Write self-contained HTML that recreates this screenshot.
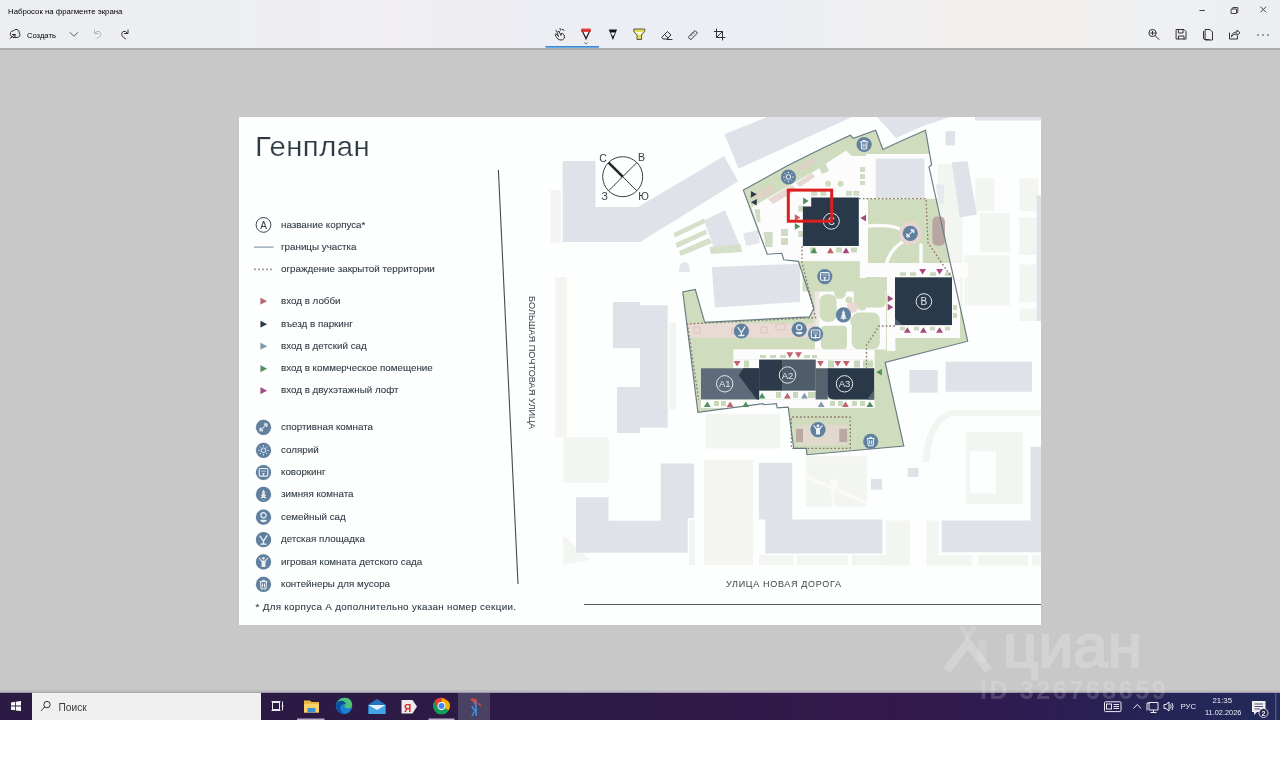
<!DOCTYPE html>
<html><head><meta charset="utf-8">
<style>
*{margin:0;padding:0;box-sizing:border-box}
html,body{width:1280px;height:764px;overflow:hidden;background:#fff;font-family:"Liberation Sans",sans-serif}
.abs{position:absolute}
#top{left:0;top:0;width:1280px;height:48px;background:linear-gradient(90deg,#eceef2 0%,#eeeff3 20%,#f0eef1 30%,#eceef4 45%,#ebeef5 55%,#eeeff2 65%,#f2efee 75%,#f3f0ec 82%,#eef0f3 90%,#eceef2 100%)}
#topline{left:0;top:48px;width:1280px;height:2px;background:#acacac}
#bg{left:0;top:50px;width:1280px;height:642px;background:#c8c8c8}
#tb{left:0;top:692px;width:1280px;height:28px;background:linear-gradient(90deg,#2b1a43 0%,#2d1a46 45%,#33194a 70%,#2c1d52 82%,#252556 92%,#222a5a 100%)}
#bottom{left:0;top:720px;width:1280px;height:44px;background:#fff}
svg{position:absolute;left:0;top:0}
</style></head><body>
<div id="wrap" style="position:absolute;left:0;top:0;width:1280px;height:764px;overflow:hidden;filter:blur(0.35px)">
<div id="top" class="abs"></div>
<div id="topline" class="abs"></div>
<div id="bg" class="abs"></div>
<svg width="1280" height="764" viewBox="0 0 1280 764" font-family="Liberation Sans, sans-serif">
<rect x="239" y="117" width="802" height="508" fill="#fdfefe"/>
<defs>
<path id="site" d="M743.3 190.1 L787.3 165.8 L821.9 148.5 L850.3 135.3 L853.4 138.4 L875.7 130.2 L882.8 149.5 L902.1 140.4 L925.5 130.2 L931.6 164.8 L929 167 L967.7 341.2 L885.2 362.5 L903.8 446 L807 454.7 L806.3 448.4 L793.7 448.4 L788.2 407.2 L777.2 407.9 L776.4 403.6 L763.8 404.7 L763.1 403.6 L697.9 412.3 L682.8 291.9 L695.3 289.5 L704.7 322.3 L809.4 316.9 L814 308.3 L798.4 261.4 L783.7 259.7 L781.8 253.3 L767.2 254.2Z"/>
<path id="tri" d="M-3.4 2.6 L0 -3 L3.4 2.6Z"/>
</defs>
<g id="map">
<!-- faint background blocks -->
<g fill="#f3f5f0">
<rect x="555" y="277" width="12" height="160" fill="#f6f4f1"/>
<rect x="669" y="323" width="7" height="86"/>
<rect x="563" y="437" width="46" height="46" rx="3"/>
<rect x="689" y="520" width="6" height="45"/>
<path d="M563 535 L590 560 L563 565Z"/>
<rect x="704" y="460" width="49" height="105" fill="#f4f5f1"/>
<rect x="705.7" y="413.8" width="74" height="34.6" fill="#f3f5f1"/>
<rect x="805.8" y="456.3" width="61.2" height="50.3" rx="2"/>
<path d="M805 476 L867 503 M833 483 V507" fill="none" stroke="#fafbf9" stroke-width="3"/>
<circle cx="834" cy="483" r="4" fill="#fafbf9"/>
<rect x="759" y="555" width="34" height="10"/>
<rect x="797" y="555" width="51" height="10"/>
<rect x="852" y="555" width="43" height="10"/>
<rect x="886" y="520.6" width="24" height="45"/>
<rect x="926.6" y="520.6" width="12" height="34"/>
<rect x="926.6" y="555" width="45" height="10.7"/>
<rect x="977.8" y="555" width="50" height="10.7"/>
<rect x="1032" y="555" width="9" height="10.7"/>
<path d="M965.8 431.8 H1023 V504 H965.8Z M970 451.3 V493.5 H995.9 V451.3Z" fill-rule="evenodd"/>
<path d="M922 462 Q925 420 950 410 H1041 V416 H952 Q932 424 929 462Z"/>
<rect x="937.7" y="164" width="25" height="179"/>
<rect x="975.4" y="178.2" width="19" height="33"/>
<rect x="980" y="213" width="30" height="39"/>
<rect x="964.4" y="255.2" width="45.6" height="50.2"/>
<rect x="1019.3" y="178.2" width="19" height="33"/>
<rect x="1019.3" y="217.5" width="19" height="37.5"/>
<rect x="1019.3" y="264.6" width="19" height="37.7"/>
<rect x="1019.3" y="308.6" width="19" height="12.4"/>
<rect x="550.5" y="190" width="10.5" height="52.6" fill="#f5f3f1"/>
<path d="M679 272 Q679 262 684.5 262 Q690 262 690 272Z" fill="#e3e6ea"/>
</g>
<!-- light gray buildings -->
<g fill="#dfe3e9">
<path d="M562.6 161 H595.5 V207 H638 L724 156 L738.2 181.3 L640.2 242 H562.6Z"/>
<path d="M724.4 134.3 L767 117 H852 L738.6 168.8Z"/>
<path d="M877 117 L896 138 L923.6 125.7 L950 117Z"/>
<rect x="975" y="117" width="66" height="3.5"/>
<rect x="945.5" y="131.1" width="9.5" height="14.2"/>
<path d="M951.8 162.5 L967.5 161 L977 214.4 L959.7 217.5Z"/>
<rect x="936" y="184.5" width="8" height="19" fill="#e6e9ee"/>
<path d="M704 220.3 L725 210.2 L740.6 246.9 L715 251Z"/>
<path d="M743.3 233.2 L758 230 L759.8 243.2 L746 246Z" fill="#e3e7ec"/>
<path d="M612.9 302 H640 V305.3 H667.7 V427.8 H640 V433 H617 V387 H640 V348.2 H612.9Z"/>
<rect x="909.5" y="370" width="28.3" height="22.7"/>
<rect x="945.6" y="361.7" width="86.4" height="30.1"/>
<rect x="1036.6" y="195.5" width="4.4" height="125.5"/>
<path d="M576 497.3 H608.5 V520.7 H660.7 V463.6 H693.9 V518 H687.8 V552.7 H576Z"/>
<path d="M759 462.8 H792.3 V519.5 H882.4 V553.6 H765.2 V519.5 H759Z"/>
<path d="M941.7 520.6 H1030.5 V446.8 H1041 V552.2 H941.7Z"/>
<rect x="907.7" y="467.9" width="10.8" height="9.1"/>
<rect x="871" y="478.8" width="11" height="11"/>
</g>
<!-- green strips outside site -->
<g fill="#d5e0c9">
<path d="M673.7 233 L704 218.5 L705 223 L675 237.5Z"/>
<path d="M675.5 243 L706 229.5 L707 234 L677 248Z"/>
<path d="M679 251 L709 238 L712 243 L681 256Z"/>
<path d="M709.4 247 L740.6 244 L742 252 L711 254Z"/>
</g>
<!-- site base green -->
<use href="#site" fill="#cfdcbd"/>
<!-- white interior areas -->
<g fill="#fbfcfb">
<path d="M749 200 L752 207 L813 172 L846 150.5 L852 156 L868 156 L868 246 H803 V261 L798.4 261.4 L783.7 259.7 L781.8 253.3 L767.2 254.2Z"/>
<rect x="801.8" y="246" width="64.7" height="15.3"/>
<rect x="860" y="240" width="8" height="37"/>
<rect x="866" y="263" width="102" height="14"/>
<rect x="886.9" y="263" width="8.5" height="88"/>
<rect x="886.9" y="325" width="73" height="13"/>
<rect x="952" y="263" width="8" height="75"/>
<rect x="733.2" y="349.4" width="141.4" height="10.2"/>
<rect x="733.2" y="359.6" width="26" height="8.7"/>
<rect x="815.7" y="359.6" width="58.9" height="8.7"/>
<rect x="757.6" y="390.6" width="60.4" height="8.8"/>
<rect x="701" y="399.4" width="173.6" height="8.6"/>
</g>
<!-- top band pink patches -->
<g fill="#e4cfc9" opacity="0.8">
<path d="M752 196 L770 185 L776 190 L758 201Z"/>
<path d="M768 199 L792 185 L797 190 L773 204Z"/>
<path d="M796 183 L812 173 L815 177 L800 187Z"/>
<path d="M795 168 L815 157 L818 161 L798 172Z"/>
</g>
<!-- green patches in north white zone -->
<g fill="#cfdbc2">
<path d="M813 156 L821 154 L829 171 L822 174Z"/>
<rect x="811.2" y="190.8" width="6" height="5"/>
<rect x="820.3" y="190.8" width="6" height="5"/>
<rect x="846" y="190.8" width="6" height="5"/>
<rect x="853.3" y="190.8" width="6" height="5"/>
<rect x="798.3" y="205.5" width="5" height="6"/>
<rect x="798.3" y="231" width="5" height="6"/>
<rect x="781" y="229" width="7" height="7"/>
<rect x="781" y="238" width="7" height="7"/>
<path d="M763.5 232 H772.7 V247 H765.5Z"/>
<path d="M754.3 209.3 L759.8 209.3 L760.5 222 L757 222Z"/>
<circle cx="828" cy="183.7" r="3"/>
<circle cx="840.5" cy="183.7" r="3"/>
<rect x="860" y="167" width="5" height="5"/>
<rect x="860" y="174" width="5" height="5"/>
<rect x="860" y="181" width="5" height="4"/>
<rect x="870" y="182" width="14" height="2"/>
</g>
<!-- pink zone west -->
<rect x="688" y="323.5" width="127" height="14" fill="#eadad6"/>
<g fill="none" stroke="#dcbcb8" stroke-width="0.8">
<rect x="694" y="327" width="6" height="6"/>
<rect x="732" y="328" width="6" height="6"/>
<rect x="761" y="327" width="6" height="6"/>
<rect x="776" y="324" width="9" height="6"/>
</g>
<!-- gray building inside site notch -->
<path d="M711.7 266.9 L800 263.75 L800 302 L714.8 307.5Z" fill="#dfe3e9"/>
<path d="M866 154 H931 L938 198.7 H866Z" fill="#fbfcfb"/>
<rect x="875.7" y="158.7" width="48.8" height="39.3" fill="#dfe3e9"/>
<!-- courtyard white blobs -->
<path d="M815 291 H886 V349.5 H815Z" fill="#fbfcfb"/>
<rect x="859.6" y="261" width="6" height="30" fill="#fbfcfb"/>
<g fill="#cfdcbd">
<path d="M802.6 291.6 V261.5 H859.6 V286 Q859.6 291.6 854 291.6 H846 Q846 299 840 299 Q834 299 834 291.6Z"/>
<rect x="853.7" y="277.9" width="32" height="29.5" rx="5"/>
<rect x="819.6" y="294.3" width="17" height="27.5" rx="7"/>
<rect x="821" y="325.7" width="26" height="23.6" rx="4"/>
<rect x="851.7" y="312.6" width="28.1" height="36.6" rx="7"/>
<circle cx="855" cy="321" r="5"/>
<circle cx="862" cy="306" r="4.5"/>
<circle cx="849" cy="300" r="3.5"/>
</g>
<circle cx="852.4" cy="307.4" r="5.5" fill="#ead6d2"/>
<rect x="812.5" y="291" width="7" height="48" fill="#e8dcd6" opacity="0.6"/>
<g fill="none" stroke="#fbfcfb" stroke-width="3.5" stroke-linecap="round">
<path d="M868 226 Q896 224 904 232"/>
<path d="M906 240 Q890 248 886 265"/>
<path d="M921 245 L921 265"/>
</g>
<circle cx="910.3" cy="233.3" r="11.5" fill="#e8d5d1"/>

<rect x="932.3" y="216.5" width="12.6" height="29.3" rx="5" fill="#b9a5a2"/>
<!-- green squares around B and A -->
<g fill="#c9d7bb">
<rect x="900" y="272.3" width="6" height="3.6"/>
<rect x="910" y="272.3" width="6" height="3.6"/>
<rect x="930" y="272.3" width="6" height="3.6"/>
<rect x="945" y="272.3" width="6" height="3.6"/>
<rect x="900" y="326.8" width="5" height="3.6"/>
<rect x="914" y="326.8" width="5" height="3.6"/>
<rect x="930" y="326.8" width="5" height="3.6"/>
<rect x="945" y="326.8" width="5" height="3.6"/>
<rect x="953" y="305" width="4" height="5"/>
<rect x="953" y="313" width="4" height="5"/>
<rect x="810" y="247.5" width="6" height="5"/>
<rect x="836" y="247.5" width="6" height="5"/>
<rect x="851" y="247.5" width="6" height="5"/>
<rect x="760" y="355" width="6" height="3"/>
<rect x="770" y="355" width="6" height="3"/>
<rect x="780" y="355" width="6" height="3"/>
<rect x="804" y="355" width="6" height="3"/>
<rect x="812" y="355" width="5" height="3"/>
<rect x="744" y="360.5" width="5" height="7"/>
<rect x="828" y="360.5" width="6" height="7"/>
<rect x="854" y="360.5" width="6" height="7"/>
<rect x="863" y="360.5" width="10" height="7"/>
<rect x="776" y="392" width="5" height="6"/>
<rect x="793" y="392" width="5" height="6"/>
<rect x="808" y="392" width="8" height="6"/>
<rect x="714" y="401" width="5" height="5"/>
<rect x="721" y="401" width="5" height="5"/>
<rect x="830" y="401" width="5" height="5"/>
<rect x="838" y="401" width="5" height="5"/>
<rect x="852" y="401" width="5" height="5"/>
<rect x="860" y="401" width="5" height="5"/>
</g>
<!-- playground zone -->
<rect x="797" y="425" width="50" height="20" fill="#e4d8d0" opacity="0.85"/>
<rect x="796" y="428.8" width="7" height="13.3" fill="#bba7a3"/>
<rect x="839.3" y="428.8" width="7.8" height="13.3" fill="#bba7a3"/>
<!-- dark buildings -->
<path d="M811.2 197.4 H858.8 V246 H802.9 V206.6 H811.2Z" fill="#2a394a"/>
<rect x="895" y="277.4" width="57" height="47.7" fill="#2a394a"/>
<path d="M895 318 L902 325.1 H895Z" fill="#56616d"/>
<rect x="701" y="368.3" width="58.1" height="31.1" fill="#5d6b7a"/>
<path d="M738.7 375.3 L743.4 368.3 H759.1 V399.4 H756.8Z" fill="#2c3a4b"/>
<rect x="759.1" y="359.6" width="23.6" height="31" fill="#2d3b4c"/>
<rect x="782.7" y="359.6" width="33" height="31" fill="#4f5c6a"/>
<rect x="815.7" y="368.3" width="12" height="31.1" fill="#56636f"/>
<path d="M827.5 368.3 H874.1 V399.4 H833.5 Q827.5 399.4 827.5 393Z" fill="#2a394a"/>
<path d="M874.1 390 V399.4 H867Z" fill="#56636f"/>
<!-- building labels -->
<g fill="none" stroke="#e3e8ec" stroke-width="1">
<circle cx="831.3" cy="221.2" r="8"/>
<circle cx="923.9" cy="301.5" r="7.8"/>
<circle cx="724.7" cy="383.8" r="8.2"/>
<circle cx="787.5" cy="375" r="8.2"/>
<circle cx="844.5" cy="383.8" r="8.2"/>
</g>
<g fill="#e3e8ec" font-size="10" text-anchor="middle">
<text x="923.9" y="305.1">B</text>
<text x="831.3" y="224.8">C</text>
<text x="724.7" y="387.3" font-size="9.5">A1</text>
<text x="787.5" y="378.5" font-size="9.5">A2</text>
<text x="844.5" y="387.3" font-size="9.5">A3</text>
</g>
<!-- fence -->
<g fill="none" stroke="#8c7468" stroke-width="1.3" stroke-dasharray="1.7 2.1">
<path d="M859 198.7 H926 L928 242.7 L952 278"/>
<path d="M802 246 V262 L815.6 317.7 L687.5 323.9 L698.6 399.7"/>
<path d="M895 326 H879 L866.5 345.5 V368"/>
<rect x="791.3" y="417" width="59" height="31.4" rx="1"/>
</g>
<!-- boundary -->
<use href="#site" fill="none" stroke="#687b84" stroke-width="1.15"/>
<!-- triangles -->
<g>
<use href="#tri" transform="translate(805.7 201) rotate(90)" fill="#4e9160"/>
<use href="#tri" transform="translate(797.4 217.6) rotate(90)" fill="#c0626a"/>
<use href="#tri" transform="translate(797.4 226.4) rotate(90)" fill="#4e9160"/>
<use href="#tri" transform="translate(813.9 250.6)" fill="#4e9160"/>
<use href="#tri" transform="translate(830.4 250.6)" fill="#c0626a"/>
<use href="#tri" transform="translate(846 250.6)" fill="#a54a7e"/>
<use href="#tri" transform="translate(863.4 218.1) rotate(-90)" fill="#a54a7e"/>
<use href="#tri" transform="translate(752.5 193.7) rotate(-30)" fill="#2c3a48"/>
<use href="#tri" transform="translate(755.2 202.9) rotate(150)" fill="#2c3a48"/>
<use href="#tri" transform="translate(922.6 271.5) rotate(180)" fill="#a54a7e"/>
<use href="#tri" transform="translate(939.6 271.5) rotate(180)" fill="#a54a7e"/>
<use href="#tri" transform="translate(890.3 298.7) rotate(90)" fill="#a54a7e"/>
<use href="#tri" transform="translate(890.3 307.2) rotate(90)" fill="#a54a7e"/>
<use href="#tri" transform="translate(907.3 330.2)" fill="#a54a7e"/>
<use href="#tri" transform="translate(923.4 330.2)" fill="#a54a7e"/>
<use href="#tri" transform="translate(939.6 330.2)" fill="#a54a7e"/>
<use href="#tri" transform="translate(737.1 363.6) rotate(180)" fill="#c0626a"/>
<use href="#tri" transform="translate(789.8 354.9) rotate(180)" fill="#c0626a"/>
<use href="#tri" transform="translate(798.4 354.9) rotate(180)" fill="#c0626a"/>
<use href="#tri" transform="translate(820.4 363.6) rotate(180)" fill="#c0626a"/>
<use href="#tri" transform="translate(837.7 363.6) rotate(180)" fill="#c0626a"/>
<use href="#tri" transform="translate(846.3 363.6) rotate(180)" fill="#c0626a"/>
<use href="#tri" transform="translate(762 395.8)" fill="#4e9160"/>
<use href="#tri" transform="translate(787.4 395.8)" fill="#c0626a"/>
<use href="#tri" transform="translate(804.4 395.8)" fill="#7d97ae"/>
<use href="#tri" transform="translate(707.3 404.4)" fill="#4e9160"/>
<use href="#tri" transform="translate(730.1 404.4)" fill="#c0626a"/>
<use href="#tri" transform="translate(745.8 404.4)" fill="#4e9160"/>
<use href="#tri" transform="translate(821.2 404.4)" fill="#7d97ae"/>
<use href="#tri" transform="translate(845.5 404.4)" fill="#c0626a"/>
<use href="#tri" transform="translate(869.9 404.4)" fill="#4e9160"/>
<use href="#tri" transform="translate(879.3 372.2) rotate(-90)" fill="#4e9160"/>
</g>
<!-- red selection rect -->
<rect x="788.3" y="190.1" width="43.4" height="31.1" fill="none" stroke="#dd1f1f" stroke-width="3"/>
<!-- compass -->
<g stroke="#3b3f44" fill="none">
<circle cx="622.7" cy="176.7" r="20" stroke-width="1"/>
<line x1="608.6" y1="162.6" x2="636.8" y2="190.8" stroke-width="1"/>
<line x1="636.8" y1="162.6" x2="608.6" y2="190.8" stroke-width="1"/>
<line x1="608.6" y1="162.6" x2="622.7" y2="176.7" stroke-width="2.6" stroke="#22262a"/>
</g>
<g font-size="10.5" fill="#3a3e42">
<text x="599.2" y="162">С</text>
<text x="638" y="161">В</text>
<text x="601.5" y="200">З</text>
<text x="638.2" y="200">Ю</text>
</g>
<!-- map icons -->
<use href="#i-trash" x="864.1" y="144.5"/>
<use href="#i-sun" x="788.4" y="177"/>
<use href="#i-sport" x="910.3" y="233.3"/>
<use href="#i-cowork" x="824.8" y="276.6"/>
<use href="#i-tree" x="843.5" y="314.9"/>
<use href="#i-play" x="741.4" y="331"/>
<use href="#i-family" x="799.2" y="329.4"/>
<use href="#i-cowork" x="815.6" y="334"/>
<use href="#i-kid" x="818" y="429.6"/>
<use href="#i-trash" x="870.7" y="441.3"/>
</g>

<defs>
<g id="ic"><circle r="7.6" fill="#6080a0"/></g>
<g id="i-sport"><circle r="7.6" fill="#6080a0"/><g transform="rotate(-45)" fill="#eef2f5"><rect x="-2.5" y="-0.5" width="5" height="1"/><rect x="-4" y="-2.3" width="1.6" height="4.6"/><rect x="2.4" y="-2.3" width="1.6" height="4.6"/><rect x="-5.2" y="-1.3" width="1" height="2.6"/><rect x="4.2" y="-1.3" width="1" height="2.6"/></g></g>
<g id="i-sun"><circle r="7.6" fill="#6080a0"/><g stroke="#eef2f5" stroke-width="1" fill="none"><circle r="2.3"/><path d="M0 -5.2V-3.8M0 3.8V5.2M-5.2 0H-3.8M3.8 0H5.2M-3.7 -3.7L-2.7 -2.7M2.7 2.7L3.7 3.7M-3.7 3.7L-2.7 2.7M2.7 -2.7L3.7 -3.7"/></g></g>
<g id="i-cowork"><circle r="7.6" fill="#6080a0"/><rect x="-4.3" y="-4" width="8.6" height="7.6" rx="1.2" fill="none" stroke="#eef2f5" stroke-width="1.1"/><rect x="-2.6" y="-2.4" width="5.2" height="2" fill="#eef2f5" opacity="0.35"/><path d="M-1.8 0.4 H1.8 L0.6 1.6 V4.6 H-0.6 V1.6Z" fill="#eef2f5"/></g>
<g id="i-tree"><circle r="7.6" fill="#6080a0"/><path d="M0 -5L-2 -1.5H2Z M0 -2.5L-2.8 1.5H2.8Z M0 0.5L-3.6 3.8H3.6Z" fill="#eef2f5"/><rect x="-0.5" y="3.8" width="1" height="1.5" fill="#eef2f5"/></g>
<g id="i-family"><circle r="7.6" fill="#6080a0"/><circle cy="-2" r="2.6" fill="none" stroke="#eef2f5" stroke-width="1.2"/><path d="M-3.5 2.5 H3.5 Q3 5 0 5 Q-3 5 -3.5 2.5Z" fill="#eef2f5"/></g>
<g id="i-play"><circle r="7.6" fill="#6080a0"/><g stroke="#eef2f5" stroke-width="1.3" fill="none" stroke-linecap="round"><path d="M-3.5 -3.5 L0 1.5 L3.5 -4 M0 1.5 V4.5 M-2.5 4.5 H2.5"/></g></g>
<g id="i-kid"><circle r="7.6" fill="#6080a0"/><circle cy="-3.6" r="1.4" fill="#eef2f5"/><path d="M-4 -4.5 L-1.5 -1.5 H1.5 L4 -4.5 L4.8 -3.8 L2 0 V5 H-2 V0 L-4.8 -3.8Z" fill="#eef2f5"/></g>
<g id="i-trash"><circle r="7.6" fill="#6080a0"/><g fill="none" stroke="#eef2f5" stroke-width="1"><path d="M-3.8 -2.8H3.8 M-1.5 -4H1.5 M-3 -2.8 L-2.5 4.5 H2.5 L3 -2.8"/><path d="M-1 -1V3M1 -1V3"/></g></g>
</defs>
<g id="legend" fill="#2e3943">
<text transform="translate(255,156.3) scale(1.085,1)" font-size="27" letter-spacing="0.45" fill="#2e3a44" stroke="#fdfefe" stroke-width="0.25">Генплан</text>
<g font-size="9.8" stroke="#2e3943" stroke-width="0.08">
<circle cx="263.5" cy="224.9" r="7.4" fill="none" stroke="#3a4650" stroke-width="1"/>
<text x="263.5" y="228.6" font-size="10" text-anchor="middle" fill="#3a4650">A</text>
<text x="281" y="227.5">название корпуса*</text>
<line x1="254" y1="247.1" x2="273.5" y2="247.1" stroke="#7b93a3" stroke-width="1.1"/>
<text x="281" y="249.7">границы участка</text>
<line x1="254" y1="269.4" x2="273.5" y2="269.4" stroke="#a58f92" stroke-width="1.7" stroke-dasharray="1.8 2.2"/>
<text x="281" y="272">ограждение закрытой территории</text>
<path d="M260.5 297.8 L267 301.2 L260.5 304.6Z" fill="#c0656c"/>
<text x="281" y="303.9">вход в лобби</text>
<path d="M260.5 320.8 L267 324.2 L260.5 327.6Z" fill="#2c3a48"/>
<text x="281" y="326.9">въезд в паркинг</text>
<path d="M260.5 342.8 L267 346.2 L260.5 349.6Z" fill="#7f98b0"/>
<text x="281" y="348.9">вход в детский сад</text>
<path d="M260.5 365.3 L267 368.7 L260.5 372.1Z" fill="#4f9160"/>
<text x="281" y="371.4">вход в коммерческое помещение</text>
<path d="M260.5 387.3 L267 390.7 L260.5 394.1Z" fill="#a8487e"/>
<text x="281" y="393.4">вход в двухэтажный лофт</text>
<use href="#i-sport" x="263.5" y="427.3"/>
<text x="281" y="430">спортивная комната</text>
<use href="#i-sun" x="263.5" y="450.3"/>
<text x="281" y="453">солярий</text>
<use href="#i-cowork" x="263.5" y="472.5"/>
<text x="281" y="475.2">коворкинг</text>
<use href="#i-tree" x="263.5" y="494.4"/>
<text x="281" y="497.1">зимняя комната</text>
<use href="#i-family" x="263.5" y="517.2"/>
<text x="281" y="519.9">семейный сад</text>
<use href="#i-play" x="263.5" y="539.7"/>
<text x="281" y="542.4">детская площадка</text>
<use href="#i-kid" x="263.5" y="561.9"/>
<text x="281" y="564.6">игровая комната детского сада</text>
<use href="#i-trash" x="263.5" y="584.4"/>
<text x="281" y="587.1">контейнеры для мусора</text>
<text x="255.5" y="610.1" font-size="9.8" letter-spacing="0.32">* Для корпуса А дополнительно указан номер секции.</text>
</g>
<line x1="498.4" y1="170" x2="518" y2="584" stroke="#464b50" stroke-width="1.1"/>
<text transform="translate(528.5,296) rotate(90)" font-size="9.2" fill="#3a4650">БОЛЬШАЯ ПОЧТОВАЯ УЛИЦА</text>
<line x1="584" y1="604.5" x2="1041" y2="604.5" stroke="#555b60" stroke-width="1.2"/>
<text x="726" y="587.3" font-size="9" letter-spacing="0.68" fill="#3d4348">УЛИЦА НОВАЯ ДОРОГА</text>
</g>

</svg>
<div id="tb" class="abs"></div>
<div id="bottom" class="abs"></div>
<div class="abs" style="left:8px;top:7.3px;font-size:7.8px;line-height:10px;color:#000;white-space:nowrap">Набросок на фрагменте экрана</div>
<div class="abs" style="left:27px;top:30.5px;font-size:7.6px;line-height:10px;color:#000;white-space:nowrap">Создать</div>
<svg width="1280" height="50" viewBox="0 0 1280 50" style="position:absolute;left:0;top:0">
<g fill="none" stroke="#333" stroke-width="1" stroke-linecap="round" stroke-linejoin="round">
<!-- create icon -->
<path d="M11.5 36.5 Q9.5 35 10.5 32.5 Q11.5 30.5 13.5 31 Q14.5 28.8 17 29.5 Q19.5 30.3 19.3 33 Q20.8 34.5 19.5 36.5 Q18.5 37.5 16 37.5 H13"/>
<path d="M10 38.5 L15 34.5 M15 34.5 H12.5 M15 34.5 V37"/>
<!-- chevron -->
<path d="M70.2 32.6 L73.9 36.3 L77.6 32.6" stroke="#555"/>
<!-- undo -->
<path d="M94.5 30 V33.5 H98 M94.8 33.3 Q97 30.5 99.5 31.5 Q101.5 33 100.5 35.5 Q99.5 37.5 97 38.5" stroke="#b5b5b5"/>
<!-- redo -->
<path d="M128 30 V33.5 H124.5 M127.7 33.3 Q125.5 30.5 123 31.5 Q121 33 122 35.5 Q123 37.5 125.5 38.8" stroke="#333"/>
<!-- touch writing -->
<path d="M556.5 31.5 Q555 30 556 29.8 M559 31.5 L561 35.5 L561 33.5 Q563 33 564.2 35 L564.5 38 Q563 40.5 560 40 Q557.5 39.5 556 36.5 L555 34.5 Q555.5 33.5 557 34.5 L558.5 36.5 L557 32.5 Q558 31 559 31.5Z M562 29.3 L564 30.2 M560 28.5 L560.5 30.2"/>
<!-- eraser -->
<path d="M662 37 L667.5 31.5 L671 35 L667 39 H663.5 Z M664.5 34.5 L668.2 38 M667 39.5 H672"/>
<!-- ruler -->
<path d="M688.5 37 L695 30.5 L697.5 33 L691 39.5Z M691 34.5 L692 35.5 M693 32.5 L694 33.5"/>
<!-- crop -->
<path d="M716.5 29 V37.5 H725 M714.3 31.5 H722.5 V40 M716.5 37.5 L722.5 31.5"/>
<!-- right icons -->
<circle cx="1152.5" cy="33" r="3.6"/>
<path d="M1155.2 35.7 L1159 39.5 M1152.5 31.2 V34.8 M1150.7 33 H1154.3"/>
<path d="M1176.5 29.5 H1184 L1186 31.5 V39 H1176.5Z M1178.5 29.5 V33 H1183 V29.5 M1178.5 39 V36 H1184 V39"/>
<path d="M1203.5 31.5 V38 Q1203.5 39.5 1205 39.5 H1209 M1205.5 29.5 H1210 L1212.5 32 V40 H1205.5Z"/>
<path d="M1229.5 33 V39 H1237.5 V36.5 M1231.5 36.5 Q1232 32 1237 32 V30 L1240 32.8 L1237 35.5 V33.8 Q1233.5 33.8 1231.5 36.5Z"/>
<!-- window controls -->
<path d="M1199.8 10.5 H1204.5" stroke="#444"/>
<path d="M1231.5 9 H1236.5 V13.5 H1231.5Z M1232.8 9 V7.5 H1237.8 V12.5 H1236.5" stroke="#444"/>
<path d="M1260.8 7 L1265.8 12 M1265.8 7 L1260.8 12" stroke="#444"/>
</g>
<g fill="#333">
<circle cx="1258" cy="35" r="0.8"/><circle cx="1263" cy="35" r="0.8"/><circle cx="1268" cy="35" r="0.8"/>
</g>
<!-- pens -->
<path d="M581.2 30 H590.8 L586 40.2Z" fill="#222"/>
<path d="M581.2 28.6 H590.8 V31 H581.2Z" fill="#e03a3a"/>
<path d="M583 31 H589 L586 37Z" fill="#fafafa"/>
<path d="M581.2 30.5 H590.8 V31.8 H581.2Z" fill="#d22"/>
<path d="M584.3 42.5 L586 44 L587.7 42.5" fill="none" stroke="#555" stroke-width="0.8"/>
<path d="M608.8 29.5 H617 L612.9 40Z" fill="#111"/>
<path d="M610.5 32.5 H615.3 L612.9 36.5Z" fill="#f5f5f5"/>
<path d="M633.8 29 H644.7 V31.5 L641.5 35 V39.5 H637 V35 L633.8 31.5Z" fill="#e6dd55" stroke="#333" stroke-width="0.8"/>
<path d="M635.5 32 H643 L640.5 34.5 H638Z" fill="#fff"/>
<rect x="545.5" y="46" width="53.5" height="1.7" fill="#3a8ad8"/>
</svg>
<!-- taskbar -->
<div class="abs" style="left:0;top:690px;width:1280px;height:2px;background:#bdbdbd"></div><div class="abs" style="left:0;top:692px;width:1280px;height:1px;background:#9f96b2"></div><div class="abs" style="left:32px;top:692px;width:229px;height:28px;background:#f0f0f0;border-top:1px solid #a9a9a9"></div>
<div class="abs" style="left:58.5px;top:701.5px;font-size:10.2px;line-height:12px;color:#3a3a3a;white-space:nowrap">Поиск</div>
<div class="abs" style="left:458px;top:693px;width:32px;height:27px;background:#4a4262"></div>
<svg width="1280" height="30" viewBox="0 692 1280 30" style="position:absolute;left:0;top:692px">
<!-- windows logo -->
<g fill="#fff"><path d="M11 702.4 L15 701.8 V705.6 H11Z M15.8 701.7 L21 701 V705.6 H15.8Z M11 706.4 H15 V710.3 L11 709.7Z M15.8 706.4 H21 V711 L15.8 710.4Z"/></g>
<!-- search glyph -->
<g fill="none" stroke="#333" stroke-width="1"><circle cx="47" cy="704.6" r="3.2"/><path d="M44.8 706.9 L41 710.8"/></g>
<!-- task view -->
<g fill="none" stroke="#e8e8f0" stroke-width="1"><rect x="272.5" y="702.5" width="7" height="7"/><path d="M271.5 701.5 H280.5 M271.5 710.5 H280.5 M282.5 701.5 V710.5 M281.5 706 H283.5"/></g>
<!-- explorer -->
<path d="M304 700.5 H310 L311.5 702 H319 V712.5 H304Z" fill="#e9b93f"/>
<path d="M304 704 H319 V712.5 H304Z" fill="#f7d269"/>
<rect x="307.5" y="708" width="8" height="4.5" fill="#3c8fd0"/>
<rect x="297" y="718.5" width="27.5" height="1.5" fill="#b8b4c8"/>
<!-- edge -->
<circle cx="344" cy="706" r="8.2" fill="#1b7fd6"/>
<path d="M337 703 Q339.5 697.8 345 697.8 Q351.8 698.2 352.2 705 Q352 708.5 348 708.5 Q344.5 708.5 344.5 705.5 Q344 702.5 340.5 702.8 Q338.5 703 337 703Z" fill="#4cc27c"/>
<path d="M336 706 Q337 700.5 342 700.8 Q345.5 701.2 346 704.5 Q344 703.5 342 704.5 Q339.5 706 340.2 709.5 Q341 712.5 344.5 714 Q337 713.5 336 706Z" fill="#0e4f9a"/>
<!-- mail -->
<path d="M368.5 704.5 L377 699 L385.5 704.5 V714 H368.5Z" fill="#1f73c0"/>
<path d="M368.5 705 H385.5 V714 H368.5Z" fill="#42a5e6"/>
<path d="M368.5 705 L377 710 L385.5 705 H368.5Z" fill="#e6f2fb"/>
<!-- yandex -->
<path d="M401.5 700 H412.5 L417 706.5 L412.5 713.5 H401.5Z" fill="#ececec"/>
<text x="404" y="711.5" font-size="10" font-weight="bold" fill="#e0262b" font-family="Liberation Sans">Я</text>
<!-- chrome -->
<circle cx="441.5" cy="706" r="8.3" fill="#db4437"/>
<path d="M441.5 706 L434.3 710.2 A8.3 8.3 0 0 1 434.3 701.8 L 437.9 708 Z" fill="#0f9d58"/>
<path d="M441.5 706 L434.3 710.15 A8.3 8.3 0 0 0 448.7 710.15 Z" fill="#0f9d58"/>
<path d="M441.5 706 L448.7 710.15 A8.3 8.3 0 0 0 448.7 701.85 L441.5 697.7 Z" fill="#f4b400"/>
<path d="M441.5 697.7 A8.3 8.3 0 0 0 434.3 701.85 L441.5 706Z" fill="#db4437"/>
<circle cx="441.5" cy="706" r="3.9" fill="#fff"/>
<circle cx="441.5" cy="706" r="3" fill="#4285f4"/>
<rect x="428.5" y="718.5" width="26" height="1.5" fill="#b8b4c8"/>
<!-- active snip app icon -->
<path d="M470 699 Q475 697 477 700 L476 706 Z" fill="#d04545"/>
<path d="M474.5 701 L475.5 716 L477 716 L476.5 701Z" fill="#3f8ed8"/>
<path d="M472 706 Q473 710 476 710 Q474 712 472 716" fill="none" stroke="#3f8ed8" stroke-width="1.6"/>
<path d="M478 703 L481 706" stroke="#d04545" stroke-width="1.5"/>
<!-- tray -->
<g fill="none" stroke="#eaeaf2" stroke-width="1">
<rect x="1104.5" y="701.8" width="16.5" height="9.8" rx="1"/>
<rect x="1106.5" y="704" width="5" height="5"/>
<path d="M1113.5 704.5 H1119 M1113.5 706.5 H1119 M1113.5 708.5 H1119"/>
<path d="M1133.5 708.5 L1137.3 704.5 L1141 708.5"/>
<path d="M1149 702.5 H1158 V710 H1149 Z M1153.5 710 V712.5 M1150.5 712.5 H1156.5"/>
<path d="M1147 703 V710.5 M1147 703 H1150" />
<path d="M1164 704.5 H1166 L1169 702 V711 L1166 708.5 H1164Z M1170.5 704.5 Q1171.7 706.5 1170.5 708.5 M1172 703 Q1174 706.5 1172 710"/>
</g>
<path d="M1252 701 H1265.5 V712 H1257 L1254 715 V712 H1252Z" fill="#f0f0f4"/>
<path d="M1254.5 704 H1263 M1254.5 706.5 H1263 M1254.5 709 H1260" stroke="#2a2650" stroke-width="0.8"/>
<circle cx="1263.5" cy="713" r="4.5" fill="#2a2650" stroke="#f0f0f4" stroke-width="0.8"/>
<text x="1263.5" y="716" font-size="7" font-weight="bold" fill="#f0f0f4" text-anchor="middle" font-family="Liberation Sans">2</text>
<rect x="1275.3" y="693" width="1" height="27" fill="#6a6690"/>
</svg>
<div class="abs" style="left:1180.5px;top:701.5px;font-size:7.8px;line-height:10px;color:#ecebf3;white-space:nowrap">РУС</div>
<div class="abs" style="left:1212.5px;top:696px;font-size:7.8px;line-height:10px;color:#ecebf3;white-space:nowrap">21:35</div>
<div class="abs" style="left:1205px;top:707.5px;font-size:7.4px;line-height:10px;color:#ecebf3;white-space:nowrap">11.02.2026</div>
<!-- watermark -->
<div class="abs" style="left:1003px;top:611px;font-size:62px;line-height:70px;color:#fff;-webkit-text-stroke:2px #fff;opacity:0.2;white-space:nowrap">циан</div>
<svg width="70" height="70" style="position:absolute;left:935px;top:615px" viewBox="935 615 70 70">
<path d="M949 667 L967.7 643 L986 667" fill="none" stroke="rgba(255,255,255,0.2)" stroke-width="8.5" stroke-linecap="square"/>
<rect x="978" y="640" width="8" height="22" fill="rgba(255,255,255,0.12)"/>
<path d="M961 627 L967.7 636 L975 627" fill="none" stroke="rgba(255,255,255,0.15)" stroke-width="5"/>
</svg>
<div class="abs" style="left:980px;top:675.5px;font-size:25px;line-height:28px;font-weight:bold;color:rgba(255,255,255,0.17);white-space:nowrap;letter-spacing:2.6px">ID 326768659</div>

</div>
</body></html>
